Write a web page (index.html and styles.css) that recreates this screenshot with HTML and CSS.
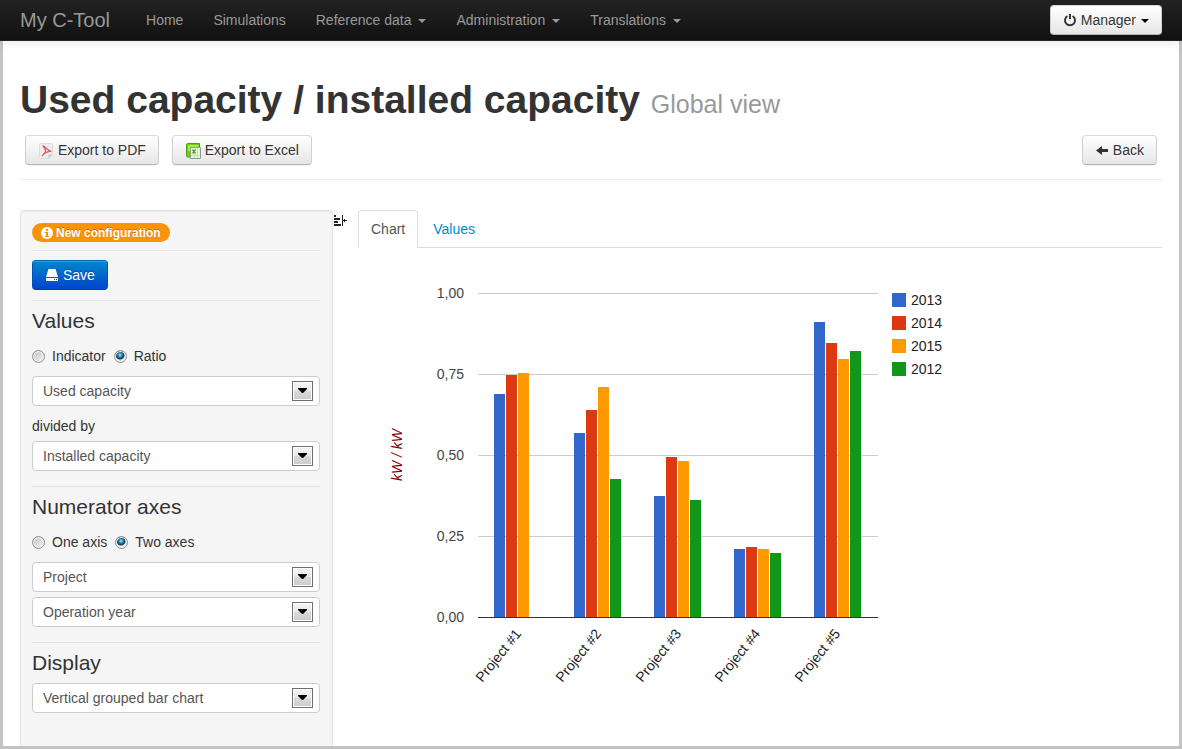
FILE: index.html
```html
<!DOCTYPE html>
<html lang="en">
<head>
<meta charset="utf-8">
<title>My C-Tool</title>
<link rel="stylesheet" href="styles.css">
</head>
<body>
<header class="navbar">
  <a class="brand" href="#">My C-Tool</a>
  <nav class="nav">
    <a href="#">Home</a>
    <a href="#">Simulations</a>
    <a href="#">Reference data<span class="caret"></span></a>
    <a href="#">Administration<span class="caret"></span></a>
    <a href="#">Translations<span class="caret"></span></a>
  </nav>
  <button class="btn btn-user" type="button">
    <svg class="icon" width="14" height="14" viewBox="0 0 14 14"><path d="M4.400 3A5 5 0 1 0 9.600 3" fill="none" stroke="#333" stroke-width="1.900"/><path d="M6 1h2v5H6z" fill="#333"/></svg>
    Manager<span class="caret caret-dark"></span>
  </button>
</header>
<main class="page">
  <h1 class="title">Used capacity / installed capacity <small>Global view</small></h1>
  <div class="toolbar">
    <button class="btn" type="button">
      <svg class="icon file-icon" width="16" height="16" viewBox="0 0 16 16"><path d="M3 .5h10a1.500 1.500 0 0 1 1.500 1.500v9.500l-4 4H3A1.500 1.500 0 0 1 1.500 14V2A1.500 1.500 0 0 1 3 .5z" fill="#ededed" stroke="#dedede"/><path d="M10.500 15.500v-4h4z" fill="#c8c8c8"/><path d="M4.500 2.500C7 3.500 9 7 13.500 8.700M13.500 8.200C10 8.500 6 10 4 13M5 3c3 3 3.500 5.500 1 8" fill="none" stroke="#e5585b" stroke-width="1.300"/></svg>
      Export to PDF
    </button>
    <button class="btn" type="button">
      <svg class="icon file-icon" width="16" height="16" viewBox="0 0 16 16"><path d="M3 .5h11.500v5h-9V14H3a1.500 1.500 0 0 1-1.500-1.500V2A1.500 1.500 0 0 1 3 .5z" fill="#6fd010" stroke="#46a012"/><path d="M3 2h10v2H5v4H3z" fill="#a6ee3a"/><path d="M5.500 4.500h10v11h-10z" fill="#e9f7e2" stroke="#8c9f8b"/><path d="M12.500 6v9M9.500 11v4M6 12.500h9" stroke="#c5dfbb"/><path d="m7.500 6.500 3 4M10.500 6.500l-3 4" stroke="#43a520" stroke-width="1.300"/></svg>
      Export to Excel
    </button>
    <button class="btn btn-back" type="button">
      <svg class="icon" width="14" height="14" viewBox="0 0 14 14"><path d="M1 7.500 7 3v3h6v3H7v3z" fill="#333"/></svg>
      Back
    </button>
  </div>
  <div class="workspace">
    <form class="sidebar">
      <div class="status">
        <span class="badge"><svg class="icon" width="12" height="12" viewBox="0 0 12 12"><circle cx="6" cy="6" r="6" fill="#fff"/><path d="M5 2h2v2H5zM4 5h3v4h1v1H4V9h1V6H4z" fill="#f89406"/></svg>New configuration</span>
      </div>
      <button class="btn btn-primary" type="button">
        <svg class="icon" width="14" height="14" viewBox="0 0 14 14"><path d="M3.500 1h7L13 9H1zM1 10h12v3H1z" fill="#fff"/><path d="M9 11.500h1M11 11.500h1" stroke="#0753c5"/></svg>
        Save
      </button>
      <section class="section">
        <h2>Values</h2>
        <div class="radios">
          <input type="radio" name="kind" id="kind-indicator"><label for="kind-indicator">Indicator</label>
          <input type="radio" name="kind" id="kind-ratio" checked><label for="kind-ratio">Ratio</label>
        </div>
        <div class="select"><select aria-label="Numerator"><option>Used capacity</option></select><svg class="drop" width="21" height="20"><use href="#drop"/></svg></div>
        <label class="between" for="denominator">divided by</label>
        <div class="select"><select id="denominator"><option>Installed capacity</option></select><svg class="drop" width="21" height="20"><use href="#drop"/></svg></div>
      </section>
      <section class="section">
        <h2>Numerator axes</h2>
        <div class="radios">
          <input type="radio" name="axes" id="axes-one"><label for="axes-one">One axis</label>
          <input type="radio" name="axes" id="axes-two" checked><label for="axes-two">Two axes</label>
        </div>
        <div class="select"><select aria-label="First axis"><option>Project</option></select><svg class="drop" width="21" height="20"><use href="#drop"/></svg></div>
        <div class="select"><select aria-label="Second axis"><option>Operation year</option></select><svg class="drop" width="21" height="20"><use href="#drop"/></svg></div>
      </section>
      <section class="section">
        <h2>Display</h2>
        <div class="select"><select aria-label="Display"><option>Vertical grouped bar chart</option></select><svg class="drop" width="21" height="20"><use href="#drop"/></svg></div>
      </section>
    </form>
    <button class="toggle" type="button" aria-label="Collapse panel">
      <svg width="14" height="12" viewBox="0 0 14 12"><path d="M0 0h2v2H0zM0 3h6v2H0zM0 6h4v2H0zM0 9h7v2H0zM8 0h1v11H8zM9 5h4v1H9zM10 4h1v3h-1z" fill="#222"/></svg>
    </button>
    <section class="results">
      <nav class="tabs">
        <a class="active" href="#">Chart</a>
        <a href="#">Values</a>
      </nav>
      <svg class="chart" width="600" height="460" viewBox="0 0 600 460">
        <g transform="translate(120 45)">
          <path d="M0 0h400v1H0zM0 81h400v1H0zM0 162h400v1H0zM0 243h400v1H0z" fill="#ccc"/>
          <path fill="#3366cc" d="M16 101h11v223H16zM96 140h11v184H96zM176 203h11v121h-11zM256 256h11v68h-11zM336 29h11v295h-11z"/>
          <path fill="#dc3912" d="M28 82h11v242H28zM108 117h11v207h-11zM188 164h11v160h-11zM268 254h11v70h-11zM348 50h11v274h-11z"/>
          <path fill="#ff9900" d="M40 80h11v244H40zM120 94h11v230h-11zM200 168h11v156h-11zM280 256h11v68h-11zM360 66h11v258h-11z"/>
          <path fill="#109618" d="M132 186h11v138h-11zM212 207h11v117h-11zM292 260h11v64h-11zM372 58h11v266h-11z"/>
          <path d="M0 324h400v1H0z" fill="#333"/>
          <g class="ticks">
            <text x="-14" y="5">1,00</text>
            <text x="-14" y="86">0,75</text>
            <text x="-14" y="167">0,50</text>
            <text x="-14" y="248">0,25</text>
            <text x="-14" y="329">0,00</text>
          </g>
          <text class="unit" transform="translate(-76 162) rotate(-90)">kW / kW</text>
          <g class="names">
            <text transform="translate(44 341) rotate(-51)">Project #1</text>
            <text transform="translate(124 341) rotate(-51)">Project #2</text>
            <text transform="translate(204 341) rotate(-51)">Project #3</text>
            <text transform="translate(283 341) rotate(-51)">Project #4</text>
            <text transform="translate(363 341) rotate(-51)">Project #5</text>
          </g>
          <g class="legend">
            <rect x="414" y="0" width="14" height="14" fill="#3366cc"/><text x="433" y="12">2013</text>
            <rect x="414" y="23" width="14" height="14" fill="#dc3912"/><text x="433" y="35">2014</text>
            <rect x="414" y="46" width="14" height="14" fill="#ff9900"/><text x="433" y="58">2015</text>
            <rect x="414" y="69" width="14" height="14" fill="#109618"/><text x="433" y="81">2012</text>
          </g>
        </g>
      </svg>
    </section>
  </div>
</main>
<svg class="defs" width="0" height="0">
  <defs>
    <linearGradient id="drop-fill" x1="0" y1="0" x2="0" y2="1"><stop offset="0" stop-color="#f4f4f4"/><stop offset=".5" stop-color="#e9e9e9"/><stop offset=".5" stop-color="#dadada"/><stop offset="1" stop-color="#cdcdcd"/></linearGradient>
    <symbol id="drop" viewBox="0 0 21 20"><rect x=".5" y=".5" width="20" height="19" fill="#fff" stroke="#707070"/><path d="M2 2h17v16H2z" fill="url(#drop-fill)"/><path d="M6 7h9v1l-4 4h-1L6 8z" fill="#000"/></symbol>
  </defs>
</svg>
</body>
</html>
```
FILE: styles.css
```css
* { box-sizing: border-box; }

body {
  display: flex;
  flex-direction: column;
  min-height: 100vh;
  margin: 0;
  background: #fff;
  color: #333;
  font: 14px/20px "Liberation Sans", Arial, sans-serif;
}

a { text-decoration: none; }

.navbar {
  position: relative;
  display: flex;
  align-items: center;
  height: 41px;
  padding: 0 20px;
  background: linear-gradient(#222, #111);
  border-bottom: 1px solid #252525;
  box-shadow: 0 1px 10px rgba(0, 0, 0, .1);
}
.brand { margin-right: 21px; color: #999; font-size: 20px; }
.nav { display: flex; }
.nav a { padding: 10px 15px; color: #999; }

.caret {
  display: inline-block;
  margin-left: 7px;
  vertical-align: middle;
  border: 4px solid transparent;
  border-top-color: currentColor;
  border-bottom: 0;
}
.caret-dark { margin-left: 5px; border-top-color: #000; }

.btn {
  height: 30px;
  padding: 4px 12px;
  background: linear-gradient(#fff, #e6e6e6);
  border: 1px solid #ccc;
  border-color: #d9d9d9 #d0d0d0 #b3b3b3;
  border-radius: 4px;
  box-shadow: 0 1px 2px rgba(0, 0, 0, .05);
  color: #333;
  font: inherit;
  text-shadow: 0 1px 1px rgba(255, 255, 255, .75);
  white-space: nowrap;
}
.btn-user { margin-left: auto; }
.btn-primary {
  display: block;
  background: linear-gradient(#0088cc, #0044cc);
  border-color: #0067b8 #0050b8 #003fae;
  box-shadow: inset 0 1px 0 rgba(255, 255, 255, .2);
  color: #fff;
  text-shadow: 0 -1px 0 rgba(0, 0, 0, .25);
}
.icon { vertical-align: -2px; }
.file-icon { vertical-align: -4px; }

.page {
  display: flex;
  flex: 1;
  flex-direction: column;
  padding: 39px 17px 0;
  border: solid #c3c3c3;
  border-width: 0 3px 3px;
}
.title { margin: 0; font-size: 39px; line-height: 40px; }
.title small { color: #999; font-size: 25px; font-weight: 400; line-height: 20px; }
.toolbar {
  display: flex;
  gap: 13px;
  padding: 15px 5px 14px;
  border-bottom: 1px solid #eee;
}
.btn-back { margin-left: auto; }

.workspace {
  display: grid;
  flex: 1;
  grid-template-columns: 313px 25px 1fr;
  margin-top: 30px;
}
.sidebar {
  padding: 12px 12px 32px 11px;
  background: #f5f5f5;
  border: 1px solid #e3e3e3;
  border-bottom: 0;
  border-radius: 4px 4px 0 0;
  box-shadow: inset 0 1px 1px rgba(0, 0, 0, .05);
}
.status {
  display: flex;
  margin-bottom: 9px;
  padding-bottom: 8px;
  border-bottom: 1px solid #e8e8e8;
  box-shadow: 0 1px 0 #fff;
}
.badge {
  display: flex;
  align-items: center;
  gap: 3px;
  height: 19px;
  padding: 0 9px;
  background: #f89406;
  border-radius: 10px;
  color: #fff;
  font-size: 12px;
  font-weight: 700;
  text-shadow: 0 -1px 0 rgba(0, 0, 0, .25);
}
.section {
  margin-top: 15px;
  padding-top: 10px;
  border-top: 1px solid #e3e3e3;
}
.btn-primary + .section { margin-top: 10px; }
.section h2 { margin: 0 0 10px; font-size: 21px; font-weight: 400; line-height: 20px; }

.radios { display: flex; align-items: center; padding-top: 5px; margin-bottom: 10px; }
.radios label { margin: 0 8px 0 7px; }
.radios input {
  appearance: none;
  width: 13px;
  height: 13px;
  margin: 0;
  background: linear-gradient(135deg, #bfc4c9, #f4f4f4);
  border: 1px solid #8e8f8f;
  border-radius: 50%;
  box-shadow: inset 0 0 0 1px #f4f4f4;
}
.radios input:checked {
  background: radial-gradient(circle at 5px 4px, #b8ecfb 0, #2b8bb5 2px, #0b3553 4px, #e6ecef 5px);
}

.select { display: grid; align-items: center; }
.select + .select { margin-top: 5px; }
.select select, .drop { grid-area: 1 / 1; }
.select select {
  appearance: none;
  width: 100%;
  height: 30px;
  padding: 0 30px 0 10px;
  background: #fff;
  border: 1px solid #ccc;
  border-radius: 4px;
  color: #555;
  font: inherit;
}
.drop { justify-self: end; margin-right: 7px; pointer-events: none; }
.between { display: block; margin: 10px 0 5px; }

.toggle {
  align-self: start;
  padding: 5px 1px;
  background: none;
  border: 0;
  text-align: left;
}
.toggle svg { display: block; }

.results { min-width: 0; }
.tabs { display: flex; gap: 2px; height: 38px; border-bottom: 1px solid #ddd; }
.tabs a {
  height: 38px;
  padding: 8px 12px;
  border: 1px solid transparent;
  border-radius: 4px 4px 0 0;
  color: #0088cc;
}
.tabs .active { background: #fff; border-color: #ddd; border-bottom-color: #fff; color: #555; }

.chart { display: block; font-size: 14px; }
.ticks { fill: #444; text-anchor: end; }
.unit { fill: #8b0000; font-style: italic; text-anchor: middle; }
.names { fill: #222; text-anchor: end; }
.legend { fill: #222; }
.defs { position: absolute; }
```
